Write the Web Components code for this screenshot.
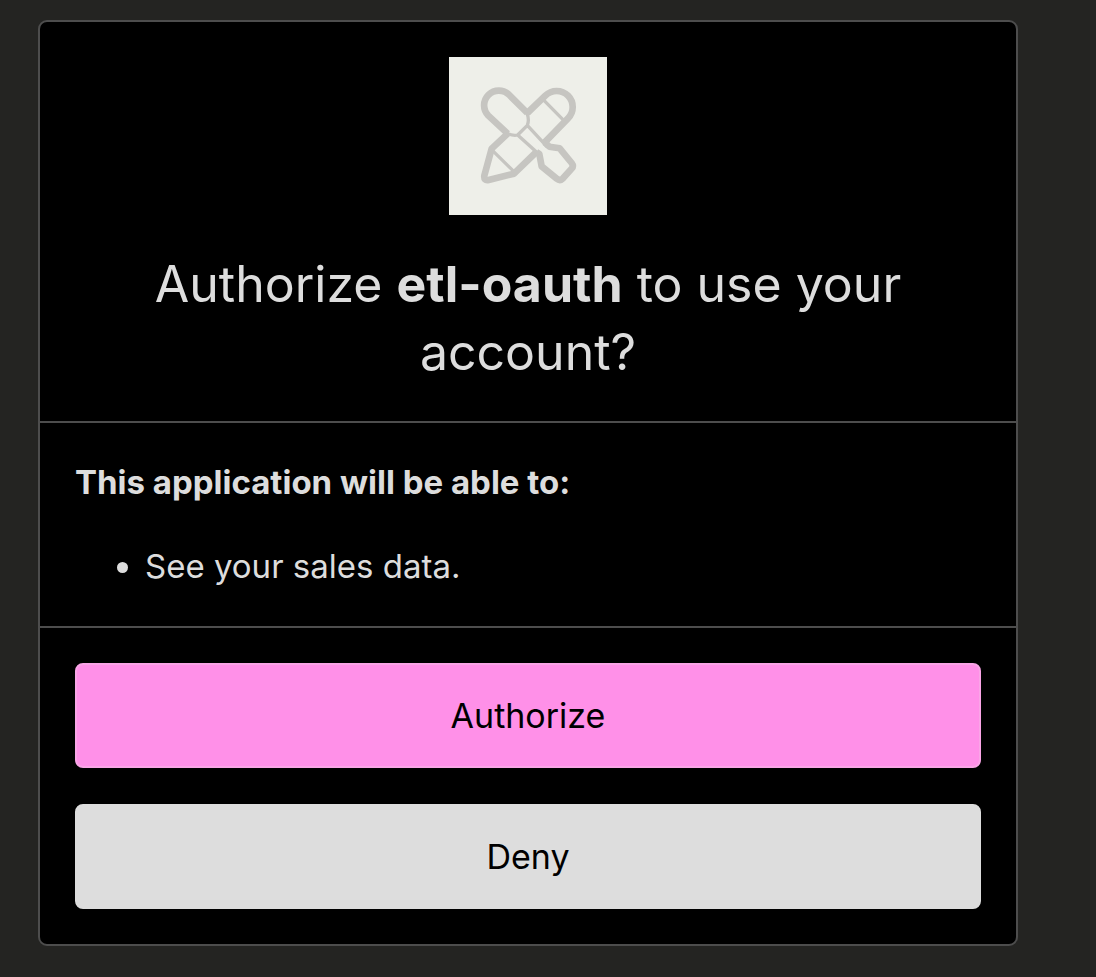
<!DOCTYPE html>
<html lang="en">
<head>
<meta charset="utf-8">
<meta name="viewport" content="width=device-width, initial-scale=1">
<title>Authorize etl-oauth</title>
<style>
  body {
    margin: 0;
    background: #242422;
    color: #ddd;
    font-family: Inter, "Liberation Sans", sans-serif;
    font-size: 34px;
    line-height: 49px;
  }
</style>
</head>
<body>
<auth-page>
  <auth-card>
    <auth-heading slot="header">Authorize <strong>etl-oauth</strong> to use your <span>account?</span></auth-heading>
    <auth-scopes slot="scopes">
      <span slot="title">This application will be able to:</span>
      <span slot="scope">See your sales data.</span>
    </auth-scopes>
    <auth-button slot="actions" variant="primary">Authorize</auth-button>
    <auth-button slot="actions">Deny</auth-button>
  </auth-card>
</auth-page>
<script>
  const define = (name, html) => {
    const template = document.createElement('template');
    template.innerHTML = html;
    customElements.define(name, class extends HTMLElement {
      constructor() {
        super();
        this.attachShadow({ mode: 'open' }).append(template.content.cloneNode(true));
      }
    });
  };

  define('app-thumbnail', `
    <style>
      :host { display: block; width: 158px; height: 158px; background: #eeefe9; }
      svg { display: block; width: 100%; height: 100%; }
    </style>
    <svg viewBox="27 27 474 474" fill="none" stroke="#c6c5c1" stroke-linejoin="round" role="img" aria-label="Application">
      <g stroke-width="20">
        <path d="M262 195 L208 141 A44 44 0 0 0 145 203 L203 257"/>
        <path d="M262 195 L316 143 A48 48 0 0 1 384 211 L314 283"/>
        <path d="M203 257 L155 302 L133 383 Q131 399 146 396 L222 377 L289 312"/>
        <path d="M314 283 L328 296 L359 301 L395 345 Q402 354 395 362 L369 391 Q360 400 350 392 L305 355 L298 318 L289 312"/>
      </g>
      <path stroke-width="10" d="M260 193 Q269 215 262 232 L233 261 Q220 265 201 256 M262 232 L321 296 M233 261 L297 319 M306 151 L374 220 M154 304 L222 371"/>
    </svg>
  `);

  define('auth-heading', `
    <style>
      :host { display: flex; flex-direction: column; align-items: center; gap: 35px; }
      h1 { margin: 0; font-size: 50px; font-weight: 400; line-height: 68px; text-align: center; }
    </style>
    <app-thumbnail></app-thumbnail>
    <h1><slot></slot></h1>
  `);

  define('auth-scopes', `
    <style>
      :host { display: flex; flex-direction: column; gap: 35px; font-size: 33px; }
      h2 { margin: 0; font-size: inherit; font-weight: 700; }
      ul { margin: 0; padding: 0 0 0 70px; }
    </style>
    <h2><slot name="title"></slot></h2>
    <ul><li><slot name="scope"></slot></li></ul>
  `);

  define('auth-button', `
    <style>
      :host { display: block; --fill: #ddd; --edge: #ddd; }
      :host([variant="primary"]) { --fill: #ff90e8; --edge: #faa5e7; }
      button {
        display: block; box-sizing: border-box; width: 100%; padding: 26px;
        border: 2px solid var(--edge); border-radius: 8px;
        background: var(--fill); color: #000; font: inherit; cursor: pointer;
      }
    </style>
    <button type="button"><slot></slot></button>
  `);

  define('auth-card', `
    <style>
      :host { display: block; border: 2px solid #4d4d4d; border-radius: 9px; background: #000; }
      header, section, footer { padding: 35px; }
      section, footer { border-top: 2px solid #4d4d4d; }
      footer { display: flex; flex-direction: column; gap: 36px; }
    </style>
    <header><slot name="header"></slot></header>
    <section><slot name="scopes"></slot></section>
    <footer><slot name="actions"></slot></footer>
  `);

  define('auth-page', `
    <style>
      :host { display: block; }
      main { padding: 20px 78px 31px 38px; }
    </style>
    <main><slot></slot></main>
  `);
</script>
</body>
</html>
